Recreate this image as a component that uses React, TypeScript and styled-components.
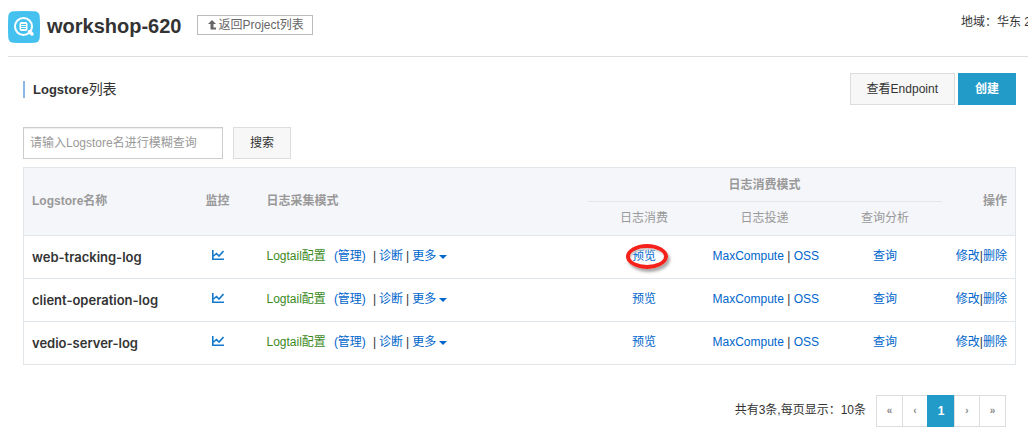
import React from "react";
import styled, { createGlobalStyle } from "styled-components";

const GlobalStyle = createGlobalStyle`
  * { box-sizing: border-box; }
  body {
    margin: 0;
    background: #fff;
    color: #333;
    font: 12px/18px "Liberation Sans", "Noto Sans CJK SC", sans-serif;
    overflow-x: hidden;
  }
  button, input { font: inherit; }
`;

const TopBar = styled.header`
  display: flex;
  align-items: center;
  margin-left: 8px;
  padding: 8px 0 10px;
  border-bottom: 1px solid #ddd;
`;

const Logo = styled.svg`
  flex: none;
  width: 32px;
  height: 38px;
`;

const ProjectName = styled.h1`
  margin: 0 16px 2px 7px;
  font-size: 20px;
  line-height: 36px;
  font-weight: bold;
  white-space: nowrap;
`;

const BackButton = styled.button`
  display: flex;
  align-items: center;
  gap: 2px;
  height: 20px;
  margin-bottom: 4px;
  padding: 0 8px 0 10px;
  border: 1px solid #bbb;
  background: #fff;
  color: #666;
  white-space: nowrap;
`;

const Region = styled.span`
  margin: 0 -3px 10px auto;
  white-space: nowrap;
`;

const Main = styled.main`
  padding: 16px 12px 0 23px;
`;

const TitleRow = styled.div`
  display: flex;
  align-items: center;
  margin-bottom: 22px;
`;

const Title = styled.h2`
  flex: 1;
  margin: 0;
  padding-left: 8px;
  border-left: 2px solid #8db8e4;
  font-size: 14px;
  line-height: 16px;
  font-weight: normal;
`;

const TitleTerm = styled.strong`
  font-size: 13px;
`;

const Button = styled.button<{ $primary?: boolean }>`
  height: 32px;
  padding: 0 16px;
  border: 1px solid ${(p) => (p.$primary ? "#239bc8" : "#ddd")};
  background: ${(p) => (p.$primary ? "#239bc8" : "#f7f7f7")};
  color: ${(p) => (p.$primary ? "#fff" : "#333")};
  font-weight: ${(p) => (p.$primary ? "bold" : "normal")};
  white-space: nowrap;
`;

const ButtonGroup = styled.div`
  display: flex;
  gap: 3px;
`;

const SearchForm = styled.form`
  display: flex;
  gap: 10px;
  margin-bottom: 8px;
`;

const SearchInput = styled.input`
  width: 200px;
  height: 32px;
  padding: 0 6px;
  border: 1px solid #ccc;
  box-shadow: inset 0 1px 1px #eee;
  &::placeholder { color: #999; opacity: 1; }
`;

const Table = styled.table`
  width: 100%;
  border: 1px solid #e1e6eb;
  border-collapse: collapse;
  table-layout: fixed;
`;

const Col = styled.col<{ $width?: number }>`
  width: ${(p) => (p.$width ? `${p.$width}px` : "auto")};
`;

type CellProps = { $align?: "left" | "center" | "right" };

const Th = styled.th<CellProps>`
  padding: 0 8px;
  background: #f5f6fa;
  color: #999;
  text-align: ${(p) => p.$align ?? "left"};
`;

const GroupTh = styled(Th)`
  padding: 0 4px;
`;

const GroupLabel = styled.div`
  padding: 8px 0 7px;
  border-bottom: 1px solid #e1e6eb;
`;

const SubTh = styled(Th)`
  height: 33px;
  font-weight: normal;
`;

const Row = styled.tr`
  border-top: 1px solid #e1e6eb;
`;

const Td = styled.td<CellProps>`
  padding: 11px 8px 13px;
  text-align: ${(p) => p.$align ?? "left"};
  white-space: nowrap;
`;

const NameTh = styled.th`
  padding: 12px 8px;
  font: 600 13px/18px Inter, "Liberation Sans", sans-serif;
  text-align: left;
  white-space: nowrap;
`;

const Link = styled.a<{ $config?: boolean }>`
  color: ${(p) => (p.$config ? "#3c8a1e" : "#06c")};
  text-decoration: none;
`;

const ModeLinks = styled.div`
  display: flex;
  gap: 3px;
`;

const ManageLink = styled(Link)`
  margin: 0 4px 0 5px;
`;

const MoreButton = styled.button`
  display: flex;
  align-items: center;
  gap: 3px;
  padding: 0;
  border: 0;
  background: none;
  color: #06c;
`;

const Caret = styled.span`
  margin-top: 3px;
  border: 4px solid transparent;
  border-top-color: #06c;
  border-bottom: 0;
`;

const ChartIcon = styled.svg`
  display: block;
  margin: 0 auto;
`;

const Marked = styled.span`
  position: relative;
  &::after {
    content: "";
    position: absolute;
    inset: -5px -12px -6px -6px;
    border: 4px solid #f5221b;
    border-radius: 50%;
    box-shadow: 2px 3px 3px #aaa, inset 1px 2px 2px #ccc;
    pointer-events: none;
  }
`;

const Footer = styled.footer`
  display: flex;
  justify-content: flex-end;
  align-items: center;
  gap: 10px;
  padding: 30px 10px 7px 0;
`;

const FooterText = styled.span`
  margin-bottom: 2px;
`;

const Pager = styled.nav`
  display: flex;
`;

const PageButton = styled.button<{ $current?: boolean; $step?: boolean }>`
  width: ${(p) => (p.$current ? 28 : p.$step ? 26 : 27)}px;
  height: 32px;
  padding: 0;
  border: 1px solid ${(p) => (p.$current ? "#239bc8" : "#ddd")};
  background: ${(p) => (p.$current ? "#239bc8" : "#fff")};
  color: ${(p) => (p.$current ? "#fff" : "#888")};
  font-size: ${(p) => (p.$current ? 12 : 10)}px;
  font-weight: bold;
  & + & { margin-left: -1px; }
`;

const stores = [
  { name: "web-tracking-log", marked: true },
  { name: "client-operation-log" },
  { name: "vedio-server-log" },
];

export default function App() {
  return (
    <>
      <GlobalStyle />
      <TopBar>
        <Logo viewBox="0 0 32 38" aria-hidden="true">
          <path d="M5 3.300Q16 2.700 27 3.300Q31.200 3.800 31.700 8Q32.300 19 31.700 30Q31.200 34.200 27 34.700Q16 35.300 5 34.700Q.8 34.200 .3 30Q-.3 19 .3 8Q.8 3.800 5 3.300Z" fill="#45c1f0" />
          <circle cx="15.500" cy="18.500" r="8.500" fill="none" stroke="#fff" strokeWidth="2" />
          <path d="M21.500 23.500L24 26" stroke="#fff" strokeWidth="3.500" strokeLinecap="round" />
          <rect x="11.500" y="14" width="8" height="9" rx="2" fill="#fff" />
          <path d="M13 16.500H18M13 18.500H18M13 20.500H18" stroke="#45c1f0" />
        </Logo>
        <ProjectName>workshop-620</ProjectName>
        <BackButton type="button">
          <svg width="8" height="10" viewBox="0 0 8 10" aria-hidden="true">
            <path d="M4 0L8 4H5.500V7.500H8V9.500H2.500V4H0Z" fill="#666" />
          </svg>
          返回Project列表
        </BackButton>
        <Region>地域：华东 2</Region>
      </TopBar>
      <Main>
        <TitleRow>
          <Title><TitleTerm>Logstore</TitleTerm>列表</Title>
          <ButtonGroup>
            <Button type="button">查看Endpoint</Button>
            <Button type="button" $primary>创建</Button>
          </ButtonGroup>
        </TitleRow>
        <SearchForm onSubmit={(e) => e.preventDefault()}>
          <SearchInput type="text" aria-label="Logstore名" placeholder="请输入Logstore名进行模糊查询" />
          <Button type="submit">搜索</Button>
        </SearchForm>
        <Table>
          <colgroup>
            <Col $width={153} />
            <Col $width={82} />
            <Col />
            <Col $width={121} />
            <Col $width={120} />
            <Col $width={121} />
            <Col $width={70} />
          </colgroup>
          <thead>
            <tr>
              <Th rowSpan={2}>Logstore名称</Th>
              <Th rowSpan={2} $align="center">监控</Th>
              <Th rowSpan={2}>日志采集模式</Th>
              <GroupTh colSpan={3} $align="center">
                <GroupLabel>日志消费模式</GroupLabel>
              </GroupTh>
              <Th rowSpan={2} $align="right">操作</Th>
            </tr>
            <tr>
              <SubTh $align="center">日志消费</SubTh>
              <SubTh $align="center">日志投递</SubTh>
              <SubTh $align="center">查询分析</SubTh>
            </tr>
          </thead>
          <tbody>
            {stores.map((store) => (
              <Row key={store.name}>
                <NameTh scope="row">{store.name}</NameTh>
                <Td $align="center">
                  <Link href="#" aria-label="监控">
                    <ChartIcon width="12" height="18" viewBox="0 0 12 18" fill="none" stroke="#1478cc" strokeWidth="1.600">
                      <path d="M.8 3V12.200H12M1.500 9L4.500 6.500L7 9L11.500 4" />
                    </ChartIcon>
                  </Link>
                </Td>
                <Td>
                  <ModeLinks>
                    <Link href="#" $config>Logtail配置</Link>
                    <ManageLink href="#">(管理)</ManageLink>
                    <span>|</span>
                    <Link href="#">诊断</Link>
                    <span>|</span>
                    <MoreButton type="button">更多<Caret /></MoreButton>
                  </ModeLinks>
                </Td>
                <Td $align="center">
                  {store.marked ? (
                    <Marked><Link href="#">预览</Link></Marked>
                  ) : (
                    <Link href="#">预览</Link>
                  )}
                </Td>
                <Td $align="center">
                  <Link href="#">MaxCompute</Link> | <Link href="#">OSS</Link>
                </Td>
                <Td $align="center"><Link href="#">查询</Link></Td>
                <Td $align="right">
                  <Link href="#">修改</Link>|<Link href="#">删除</Link>
                </Td>
              </Row>
            ))}
          </tbody>
        </Table>
        <Footer>
          <FooterText>共有3条,每页显示：10条</FooterText>
          <Pager aria-label="分页">
            <PageButton type="button">«</PageButton>
            <PageButton type="button" $step>‹</PageButton>
            <PageButton type="button" $current aria-current="page">1</PageButton>
            <PageButton type="button" $step>›</PageButton>
            <PageButton type="button">»</PageButton>
          </Pager>
        </Footer>
      </Main>
    </>
  );
}
